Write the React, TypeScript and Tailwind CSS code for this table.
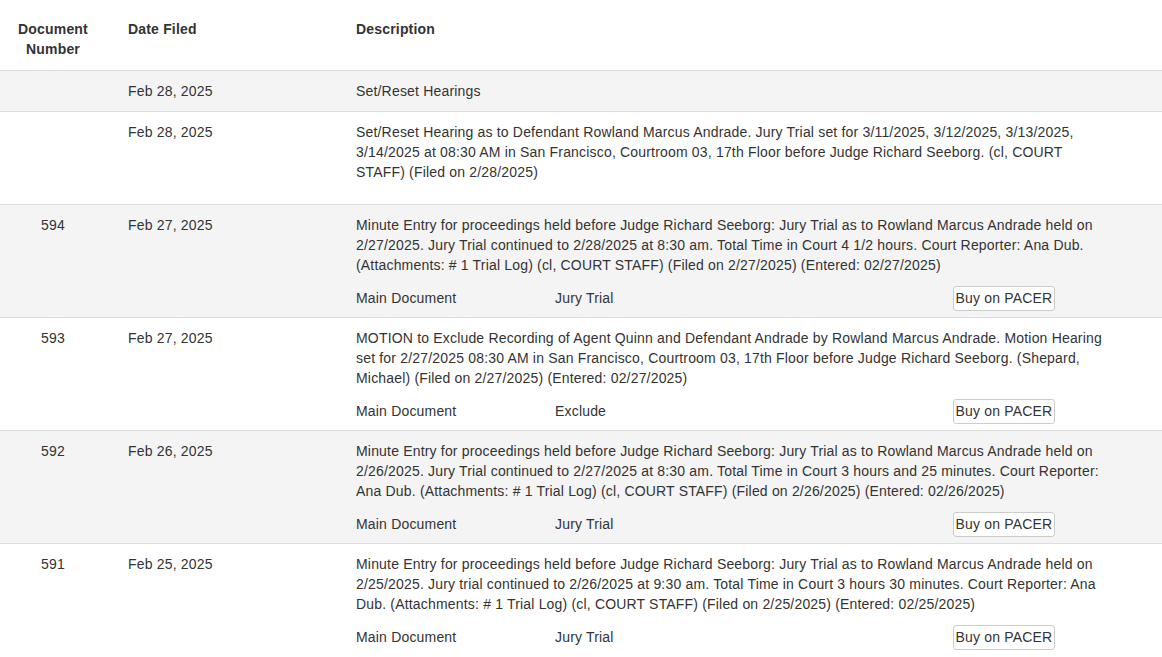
import React from "react";

type Entry = {
  num?: string;
  date: string;
  text: string;
  doc?: string;
  tail?: string;
};

const entries: Entry[] = [
  { date: "Feb 28, 2025", text: "Set/Reset Hearings" },
  {
    date: "Feb 28, 2025",
    text: "Set/Reset Hearing as to Defendant Rowland Marcus Andrade. Jury Trial set for 3/11/2025, 3/12/2025, 3/13/2025, 3/14/2025 at 08:30 AM in San Francisco, Courtroom 03, 17th Floor before Judge Richard Seeborg. (cl, COURT STAFF) (Filed on 2/28/2025)",
    tail: "pb-[22px]",
  },
  {
    num: "594",
    date: "Feb 27, 2025",
    text: "Minute Entry for proceedings held before Judge Richard Seeborg: Jury Trial as to Rowland Marcus Andrade held on 2/27/2025. Jury Trial continued to 2/28/2025 at 8:30 am. Total Time in Court 4 1/2 hours. Court Reporter: Ana Dub. (Attachments: # 1 Trial Log) (cl, COURT STAFF) (Filed on 2/27/2025) (Entered: 02/27/2025)",
    doc: "Jury Trial",
  },
  {
    num: "593",
    date: "Feb 27, 2025",
    text: "MOTION to Exclude Recording of Agent Quinn and Defendant Andrade by Rowland Marcus Andrade. Motion Hearing set for 2/27/2025 08:30 AM in San Francisco, Courtroom 03, 17th Floor before Judge Richard Seeborg. (Shepard, Michael) (Filed on 2/27/2025) (Entered: 02/27/2025)",
    doc: "Exclude",
  },
  {
    num: "592",
    date: "Feb 26, 2025",
    text: "Minute Entry for proceedings held before Judge Richard Seeborg: Jury Trial as to Rowland Marcus Andrade held on 2/26/2025. Jury Trial continued to 2/27/2025 at 8:30 am. Total Time in Court 3 hours and 25 minutes. Court Reporter: Ana Dub. (Attachments: # 1 Trial Log) (cl, COURT STAFF) (Filed on 2/26/2025) (Entered: 02/26/2025)",
    doc: "Jury Trial",
  },
  {
    num: "591",
    date: "Feb 25, 2025",
    text: "Minute Entry for proceedings held before Judge Richard Seeborg: Jury Trial as to Rowland Marcus Andrade held on 2/25/2025. Jury trial continued to 2/26/2025 at 9:30 am. Total Time in Court 3 hours 30 minutes. Court Reporter: Ana Dub. (Attachments: # 1 Trial Log) (cl, COURT STAFF) (Filed on 2/25/2025) (Entered: 02/25/2025)",
    doc: "Jury Trial",
  },
];

export default function App() {
  return (
    <div className="w-[1162px] h-[657px] overflow-hidden bg-white text-[14px] leading-[20px] tracking-[0.18px] text-[#333] font-['Liberation_Sans',Arial,sans-serif]">
      {/* Header */}
      <div className="flex font-bold pt-[19px] pb-[11px]">
        <div className="w-[106px] text-center px-[14px]">Document Number</div>
        <div className="w-[228px] pl-[22px]">Date Filed</div>
        <div className="flex-1 pl-[22px]">Description</div>
      </div>

      {entries.map((e, i) => (
        <div
          key={i}
          className={`flex border-t border-[#dddddd] ${i % 2 === 0 ? "bg-[#f4f4f4]" : "bg-white"}`}
        >
          <div className="w-[106px] text-center pt-[10px]">{e.num}</div>
          <div className="w-[228px] pl-[22px] pt-[10px]">{e.date}</div>
          <div
            className={`flex-1 pl-[22px] pr-[50px] pt-[10px] ${
              e.doc ? "pb-[6px]" : e.tail ?? "pb-[10px]"
            }`}
          >
            <p>{e.text}</p>
            {e.doc && (
              <div className="flex items-center h-[26px] mt-[10px]">
                <div className="w-[199px]">Main Document</div>
                <div className="w-[398px]">{e.doc}</div>
                <button className="h-[25px] w-[102px] bg-white border border-[#cccccc] rounded-[3px] text-[14px] text-[#333] leading-[20px] tracking-[0.18px]">
                  Buy on PACER
                </button>
              </div>
            )}
          </div>
        </div>
      ))}
    </div>
  );
}
